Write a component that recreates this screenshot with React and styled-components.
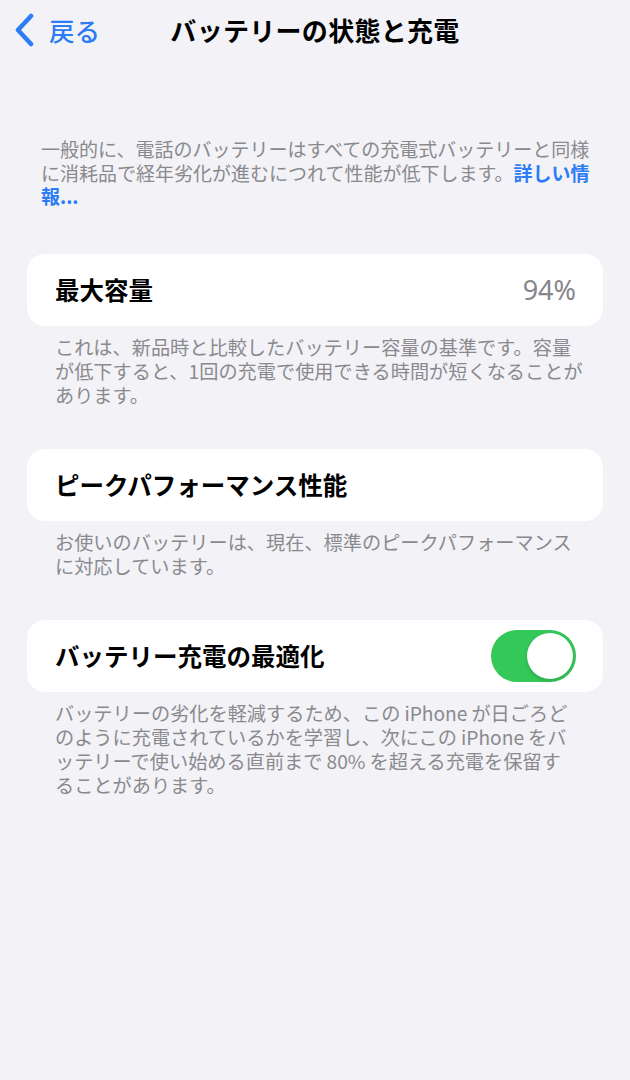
import styled, { createGlobalStyle } from 'styled-components'

const GlobalStyle = createGlobalStyle`
  html, body {
    margin: 0;
    padding: 0;
    background: #f2f2f7;
  }
  body {
    font-family: 'Noto Sans CJK JP', 'Noto Sans', sans-serif;
    -webkit-font-smoothing: antialiased;
  }
`

const Page = styled.div`
  width: 630px;
  min-height: 1080px;
  background: #f2f2f7;
  color: #000;
`

const NavBar = styled.header`
  position: relative;
  height: 58px;
  display: flex;
  align-items: center;
  justify-content: center;
`

const BackButton = styled.button`
  position: absolute;
  left: 14px;
  top: 12px;
  display: flex;
  align-items: center;
  gap: 13px;
  padding: 0;
  border: none;
  background: none;
  color: #2c7cf5;
  font-family: inherit;
  font-size: 25.5px;
  font-weight: 500;
  line-height: 36px;
  cursor: pointer;
`

const Title = styled.h1`
  margin: 0;
  font-size: 26px;
  font-weight: 700;
  letter-spacing: 0.3px;
`

const Intro = styled.p`
  margin: 79px 0 0 41px;
  width: 553px;
  font-size: 19px;
  line-height: 23.5px;
  color: #8a8a8e;
  a {
    color: #2c7cf5;
    font-weight: 700;
    text-decoration: none;
  }
`

const Section = styled.section`
  margin: ${(p) => p.$top}px 27px 0;
`

const Card = styled.div`
  height: 72px;
  background: #fff;
  border-radius: 18px;
  display: flex;
  align-items: center;
  justify-content: space-between;
  padding: 0 27px 0 28px;
`

const Label = styled.span`
  font-size: 24.5px;
  font-weight: 600;
`

const Value = styled.span`
  font-family: 'Noto Sans', 'Noto Sans CJK JP', sans-serif;
  font-size: 27px;
  color: #86868b;
`

const Footer = styled.p`
  margin: 9px 0 0;
  padding: 0 ${(p) => p.$right ?? 26}px 0 28px;
  font-size: 19.2px;
  line-height: 24px;
  color: #8a8a8e;
  word-break: break-all;
`

const Latin = styled.span`
  padding: 0 ${(p) => p.$gap ?? 4}px;
`

const Toggle = styled.div`
  width: 85px;
  height: 52px;
  border-radius: 26px;
  background: #34c759;
  display: flex;
  align-items: center;
  justify-content: ${(p) => (p.$on ? 'flex-end' : 'flex-start')};
  padding: 0 3px;
  box-sizing: border-box;
`

const Knob = styled.span`
  width: 46px;
  height: 46px;
  border-radius: 50%;
  background: #fff;
  box-shadow: 0 2px 4px rgba(0, 0, 0, 0.15);
`

const Chevron = () => (
  <svg width="22" height="34" viewBox="0 0 22 34">
    <path
      d="M17 3 L4 17 L17 31"
      fill="none"
      stroke="#2c7cf5"
      strokeWidth="4.5"
      strokeLinecap="round"
      strokeLinejoin="round"
    />
  </svg>
)

export default function App() {
  return (
    <Page lang="ja">
      <GlobalStyle />
      <NavBar>
        <BackButton>
          <Chevron />
          戻る
        </BackButton>
        <Title>バッテリーの状態と充電</Title>
      </NavBar>

      <Intro>
        一般的に、電話のバッテリーはすべての充電式バッテリーと同様に消耗品で経年劣化が進むにつれて性能が低下します。
        <a href="#">詳しい情報...</a>
      </Intro>

      <Section $top={46}>
        <Card>
          <Label>最大容量</Label>
          <Value>94%</Value>
        </Card>
        <Footer $right={16}>
          これは、新品時と比較したバッテリー容量の基準です。容量が低下すると、<Latin $gap={0}>1</Latin>回の充電で使用できる時間が短くなることがあります。
        </Footer>
      </Section>

      <Section $top={42}>
        <Card>
          <Label>ピークパフォーマンス性能</Label>
        </Card>
        <Footer>
          お使いのバッテリーは、現在、標準のピークパフォーマンスに対応しています。
        </Footer>
      </Section>

      <Section $top={42}>
        <Card>
          <Label>バッテリー充電の最適化</Label>
          <Toggle $on>
            <Knob />
          </Toggle>
        </Card>
        <Footer>
          バッテリーの劣化を軽減するため、この<Latin>iPhone</Latin>が日ごろどのように充電されているかを学習し、次にこの<Latin>iPhone</Latin>をバッテリーで使い始める直前まで<Latin>80%</Latin>を超える充電を保留することがあります。
        </Footer>
      </Section>
    </Page>
  )
}
